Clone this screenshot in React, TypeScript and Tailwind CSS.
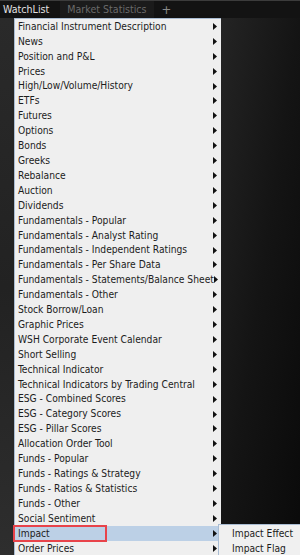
import React from "react";

const items = [
  "Financial Instrument Description",
  "News",
  "Position and P&L",
  "Prices",
  "High/Low/Volume/History",
  "ETFs",
  "Futures",
  "Options",
  "Bonds",
  "Greeks",
  "Rebalance",
  "Auction",
  "Dividends",
  "Fundamentals - Popular",
  "Fundamentals - Analyst Rating",
  "Fundamentals - Independent Ratings",
  "Fundamentals - Per Share Data",
  "Fundamentals - Statements/Balance Sheet",
  "Fundamentals - Other",
  "Stock Borrow/Loan",
  "Graphic Prices",
  "WSH Corporate Event Calendar",
  "Short Selling",
  "Technical Indicator",
  "Technical Indicators by Trading Central",
  "ESG - Combined Scores",
  "ESG - Category Scores",
  "ESG - Pillar Scores",
  "Allocation Order Tool",
  "Funds - Popular",
  "Funds - Ratings & Strategy",
  "Funds - Ratios & Statistics",
  "Funds - Other",
  "Social Sentiment",
  "Impact",
  "Order Prices",
];

function Arrow() {
  return (
    <svg width="4" height="7" viewBox="0 0 4 7" className="shrink-0">
      <path d="M0 0 L4 3.5 L0 7 Z" fill="#111" />
    </svg>
  );
}

export default function App() {
  return (
    <div
      className="relative w-[300px] h-[555px] overflow-hidden bg-[#0e0e0e] text-[10.2px] font-stretch-condensed"
      style={{ fontFamily: "'DejaVu Sans Condensed', 'DejaVu Sans', sans-serif" }}
    >
      {/* tab bar */}
      <div className="h-[18px] flex items-end bg-[#131313] border-t border-[#3c3c3c] text-[10.6px]">
        <div className="h-full flex items-center px-[3px] text-[#e4e4e4]">WatchList</div>
        <div className="h-full flex items-center ml-[8px] px-[7px] bg-[#1b1b1b] text-[#6a6a6a]">Market Statistics</div>
        <div className="h-full flex items-center px-[8px] text-[#8a8a8a] text-[13px]">+</div>
      </div>

      {/* body */}
      <div className="flex h-[537px]">
        <div className="w-[14px] bg-gradient-to-b from-[#2a2a2a] via-[#222] to-[#2e2e2e]" />
        <div className="w-[207px] bg-[#efefef] border-l border-t border-[#a9bcd2] shadow-[2px_2px_4px_rgba(0,0,0,0.6)] flex flex-col">
          {items.map((it) => {
            const active = it === "Impact";
            return (
              <div
                key={it}
                className={
                  "relative h-[14.92px] flex items-center justify-between pl-[3px] pr-[4px] text-[#1c1c1c] whitespace-nowrap " +
                  (active ? "bg-[#bcd0e6]" : "")
                }
              >
                <span>{it}</span>
                <Arrow />
                {active && (
                  <div className="absolute left-[-2px] top-[-1px] w-[94px] h-[17px] border-2 border-[#e8434a]" />
                )}
              </div>
            );
          })}
        </div>
        <div className="flex-1 bg-gradient-to-br from-[#242424] via-[#141414] to-[#0a0a0a]" />
      </div>

      {/* submenu */}
      <div className="absolute left-[218px] top-[524px] w-[84px] h-[34px] bg-[#f0f0f0] border border-[#a9bcd2] pt-[1px]">
        <div className="h-[15px] flex items-center pl-[13px] text-[#1c1c1c] whitespace-nowrap">Impact Effect</div>
        <div className="h-[15px] flex items-center pl-[13px] text-[#1c1c1c] whitespace-nowrap">Impact Flag</div>
      </div>
    </div>
  );
}
